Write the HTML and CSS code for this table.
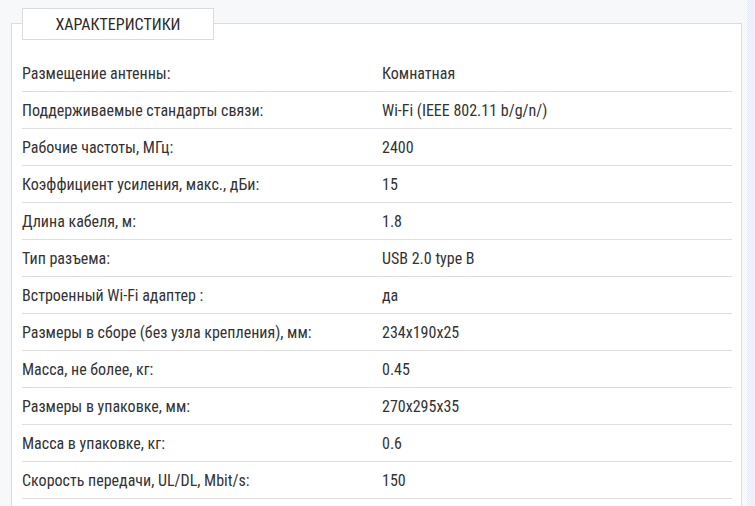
FILE: index.html
```html
<!DOCTYPE html>
<html lang="ru">
<head>
<meta charset="utf-8">
<link rel="stylesheet" href="styles.css">
</head>
<body>
<div class="page">
  <section class="panel">
    <div class="tab">ХАРАКТЕРИСТИКИ</div>
    <div class="rows">
      <div class="row"><span class="label">Размещение антенны:</span><span class="value">Комнатная</span></div>
      <div class="row"><span class="label">Поддерживаемые стандарты связи:</span><span class="value">Wi-Fi (IEEE 802.11 b/g/n/)</span></div>
      <div class="row"><span class="label">Рабочие частоты, МГц:</span><span class="value">2400</span></div>
      <div class="row"><span class="label">Коэффициент усиления, макс., дБи:</span><span class="value">15</span></div>
      <div class="row"><span class="label">Длина кабеля, м:</span><span class="value">1.8</span></div>
      <div class="row"><span class="label">Тип разъема:</span><span class="value">USB 2.0 type B</span></div>
      <div class="row"><span class="label">Встроенный Wi-Fi адаптер :</span><span class="value">да</span></div>
      <div class="row"><span class="label">Размеры в сборе (без узла крепления), мм:</span><span class="value">234x190x25</span></div>
      <div class="row"><span class="label">Масса, не более, кг:</span><span class="value">0.45</span></div>
      <div class="row"><span class="label">Размеры в упаковке, мм:</span><span class="value">270x295x35</span></div>
      <div class="row"><span class="label">Масса в упаковке, кг:</span><span class="value">0.6</span></div>
      <div class="row"><span class="label">Скорость передачи, UL/DL, Mbit/s:</span><span class="value">150</span></div>
    </div>
  </section>
  <div class="scrollstrip"></div>
</div>
</body>
</html>
```
FILE: styles.css
```css
html, body {
  margin: 0;
  padding: 0;
  background: #f7f8fa;
  font-family: Roboto, "Liberation Sans", sans-serif;
  font-stretch: 87.5%;
  color: #333;
  overflow: hidden;
}
.page {
  padding: 23px 0 0 11px;
}
.panel {
  position: relative;
  background: #fff;
  border: 1px solid #dcdcdc;
  padding: 31px 9px 0 10px;
  height: 500px;
  box-sizing: border-box;
  width: 731px;
}
.tab {
  position: absolute;
  top: -16px;
  left: 10px;
  width: 190px;
  height: 30px;
  border: 1px solid #dcdcdc;
  background: #fff;
  display: flex;
  align-items: center;
  justify-content: center;
  font-size: 16px;
  color: #2b2b2b;
}
.row {
  display: flex;
  height: 36px;
  align-items: center;
  border-bottom: 1px solid #dedede;
  font-size: 16px;
}
.label {
  width: 360px;
  flex: none;
}
.scrollstrip {
  position: fixed;
  top: 0;
  right: 0;
  width: 8px;
  height: 100%;
  background-color: #eef2fb;
  background-image: repeating-conic-gradient(#e3e9f7 0 25%, #f6f8fd 0 50%);
  background-size: 2px 2px;
}
```
